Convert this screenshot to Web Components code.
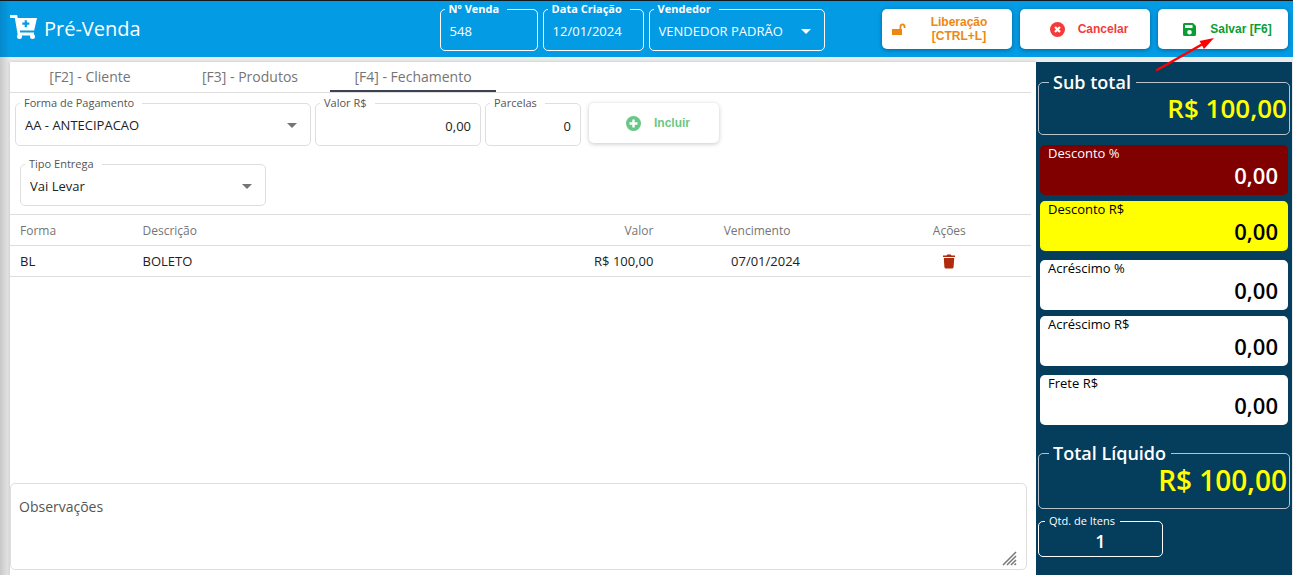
<!DOCTYPE html>
<html lang="pt-BR">
<head>
<meta charset="utf-8">
<title>Pré-Venda</title>
<style>
    html, body{height:100%}
    body{
        margin:0;
        font-family:"Open Sans", "Noto Sans", sans-serif;
        font-size:13px;
        color:#212121;
        background:#ececec
    }
</style>
</head>
<body>
<pv-pagina>
    <pv-cabecalho slot="cabecalho" titulo="Pré-Venda">
        <pv-campo class="numero" tipo="claro" rotulo="Nº Venda" valor="548"></pv-campo>
        <pv-campo class="data" tipo="claro" rotulo="Data Criação" valor="12/01/2024"></pv-campo>
        <pv-lista class="vendedor" tipo="claro" rotulo="Vendedor" valor="VENDEDOR PADRÃO"></pv-lista>
        <pv-botao slot="acoes" icone="cadeado" cor="#ee8712">Liberação [CTRL+L]</pv-botao>
        <pv-botao slot="acoes" icone="cancelar" cor="#f23c3c">Cancelar</pv-botao>
        <pv-botao slot="acoes" icone="salvar" cor="#0a9e32">Salvar [F6]</pv-botao>
    </pv-cabecalho>
    <pv-fechamento slot="conteudo"></pv-fechamento>
    <pv-totais slot="totais"></pv-totais>
</pv-pagina>
<pv-seta></pv-seta>

<template id="pv-pagina">
    <style>
        :host{display:flex;flex-direction:column;min-height:100vh;box-sizing:border-box;border-top:1px solid #14181c}
        .corpo{
            flex:1;
            display:grid;
            grid-template-columns:minmax(0, 1fr) 256px;
            padding:5px 1px 0 10px;
            background:linear-gradient(to right, #c8c8c8, #e6e6e6 9px, #ececec 10px)
        }
        ::slotted(*){min-width:0}
    </style>
    <slot name="cabecalho"></slot>
    <div class="corpo">
        <slot name="conteudo"></slot>
        <slot name="totais"></slot>
    </div>
</template>

<template id="pv-cabecalho">
    <style>
        :host{
            display:grid;
            grid-template-columns:34% 1fr auto;
            height:56px;
            color:white;
            background:linear-gradient(to right, #0489cb, #049be5 10px)
        }
        .titulo{display:flex;align-items:center;gap:7px;padding-left:10px}
        .titulo svg{width:27px;height:24px;margin-bottom:4px}
        h1{margin:0;font-size:20px;font-weight:400;line-height:28px}
        .campos{display:flex;gap:5px;padding:2px 0 6px}
        .acoes{display:flex;gap:8px;padding:8px 5px 8px 0}
        ::slotted(.numero){width:98px}
        ::slotted(.data){width:101px}
        ::slotted(.vendedor){width:176px}
    </style>
    <div class="titulo">
        <svg viewBox="0 0 27 24" fill="none" stroke="white">
            <path d="M0 1.500H6L9 19H24" stroke-width="2.800"/>
            <path d="M6 3H27L24.200 15.500H8.400Z" fill="white" stroke="none"/>
            <path d="M15.800 5.200V12.200M12.300 8.700H19.300" stroke="#049be5" stroke-width="2.200"/>
            <circle cx="9.500" cy="21.500" r="2.500" fill="white" stroke="none"/>
            <circle cx="22.500" cy="21.500" r="2.500" fill="white" stroke="none"/>
        </svg>
        <h1></h1>
    </div>
    <div class="campos"><slot></slot></div>
    <div class="acoes"><slot name="acoes"></slot></div>
</template>

<template id="pv-campo">
    <style>
        :host{display:block;--borda:#dedede;--rotulo:#555}
        :host([tipo="claro"]){--borda:white;--rotulo:white}
        fieldset{
            display:flex;
            box-sizing:border-box;
            width:100%;
            height:100%;
            min-width:0;
            margin:0;
            padding:0;
            border:1px solid var(--borda);
            border-radius:5px
        }
        legend{margin-left:4px;padding:0 8px 0 4px;font-size:11px;line-height:12px;color:var(--rotulo)}
        :host([tipo="claro"]) legend{font-weight:700}
        input, select{
            flex:1;
            box-sizing:border-box;
            width:100%;
            min-width:0;
            padding:0 9px 4px;
            border:0;
            outline:0;
            background:transparent;
            color:inherit;
            font:inherit;
            appearance:none
        }
        :host([alinhar="direita"]) input{padding-bottom:2px;text-align:right}
        svg{flex:none;align-self:center;width:10px;height:5px;margin:0 13px 3px 0;fill:#757575}
        :host([tipo="claro"]) svg{fill:white}
    </style>
    <fieldset>
        <legend><label for="entrada"></label></legend>
    </fieldset>
</template>

<template id="pv-botao">
    <style>
        :host{display:block;width:130px;height:40px}
        button{
            display:flex;
            align-items:center;
            justify-content:center;
            gap:13px;
            width:100%;
            height:100%;
            padding:0 8px 0 16px;
            border:0;
            border-radius:5px;
            background:white;
            color:var(--cor);
            font:bold 12px/14px "Liberation Sans", Arial, sans-serif;
            box-shadow:0 1px 4px rgba(0,0,0,.35)
        }
        button:disabled{opacity:.62}
        svg{flex:none;width:15px;height:15px;fill:currentColor}
        :host([icone="cadeado"]) button{gap:20px;padding:0 20px 0 9px}
    </style>
    <button type="button"><svg viewBox="0 0 15 15"></svg><span><slot></slot></span></button>
</template>

<template id="pv-fechamento">
    <style>
        :host{display:flex;flex-direction:column;background:white;box-shadow:0 0 3px rgba(0,0,0,.2)}
        nav{display:flex;height:30px;margin-right:5px;border-bottom:1px solid #dedede}
        nav button{
            box-sizing:border-box;
            min-width:160px;
            padding:0 24px;
            border:0;
            border-bottom:2px solid transparent;
            background:transparent;
            color:#757575;
            font:inherit;
            font-size:14px
        }
        nav button.ativo{min-width:166px;border-color:#3e4257}
        .linha{display:flex;gap:4px;padding:4px 5px 0}
        .linha pv-campo, .linha pv-lista{height:49px}
        .forma{width:296px}
        .valor{width:166px}
        .parcelas{width:96px}
        .linha pv-botao{margin:6px 0 0 4px}
        .entrega{padding:12px 10px 8px}
        .entrega pv-lista{width:246px;height:48px}
        table{width:calc(100% - 5px);border-collapse:collapse;table-layout:fixed}
        th, td{height:30px;padding:0 10px;border-top:1px solid #dedede;border-bottom:1px solid #dedede;text-align:left;font-size:13px;line-height:18px}
        th{height:28px;padding-top:2px;font-weight:400;font-size:12px;color:#757575}
        .direita{text-align:right}
        .centro{text-align:center}
        th.ordem{padding-right:27px}
        td button{display:block;margin:0 auto;padding:0;border:0;background:transparent}
        td svg{display:block;width:14px;height:15px;fill:#b02a0c}
        .obs{
            position:relative;
            display:flex;
            flex-direction:column;
            box-sizing:border-box;
            height:87px;
            margin:auto 9px 5px 0;
            padding:13px 8px 6px;
            border:1px solid #dedede;
            border-radius:5px
        }
        .obs label{font-size:14px;line-height:20px;color:#555}
        textarea{flex:1;border:0;outline:0;padding:0;resize:none;font:inherit}
        .obs svg{position:absolute;right:9px;bottom:3px;width:15px;height:15px;stroke:#777}
    </style>
    <nav>
        <button type="button">[F2] - Cliente</button>
        <button type="button">[F3] - Produtos</button>
        <button type="button" class="ativo">[F4] - Fechamento</button>
    </nav>
    <div class="linha">
        <pv-lista class="forma" rotulo="Forma de Pagamento" valor="AA - ANTECIPACAO"></pv-lista>
        <pv-campo class="valor" rotulo="Valor R$" valor="0,00" alinhar="direita"></pv-campo>
        <pv-campo class="parcelas" rotulo="Parcelas" valor="0" alinhar="direita"></pv-campo>
        <pv-botao icone="incluir" cor="#0ba53c" desativado>Incluir</pv-botao>
    </div>
    <div class="linha entrega">
        <pv-lista rotulo="Tipo Entrega" valor="Vai Levar"></pv-lista>
    </div>
    <table>
        <colgroup>
            <col style="width:12%"><col><col style="width:13%"><col style="width:20%"><col style="width:16%">
        </colgroup>
        <thead>
            <tr>
                <th>Forma</th>
                <th>Descrição</th>
                <th class="direita">Valor</th>
                <th class="centro ordem">Vencimento</th>
                <th class="centro">Ações</th>
            </tr>
        </thead>
        <tbody>
            <tr>
                <td>BL</td>
                <td>BOLETO</td>
                <td class="direita">R$ 100,00</td>
                <td class="centro">07/01/2024</td>
                <td class="centro">
                    <button type="button" aria-label="Excluir">
                        <svg viewBox="0 0 14 15"><path d="M1 1.500H4.500L5.300 .5H8.700L9.500 1.500H13V3H1ZM1.800 4H12.200L11.600 13Q11.500 14.500 10 14.500H4Q2.500 14.500 2.400 13Z"/></svg>
                    </button>
                </td>
            </tr>
        </tbody>
    </table>
    <div class="obs">
        <label for="obs">Observações</label>
        <textarea id="obs"></textarea>
        <svg viewBox="0 0 15 15" stroke-width="1.500"><path d="M1 14L14 1M5 14L14 5M9 14L14 9M12.500 14L14 12.500"/></svg>
    </div>
</template>

<template id="pv-totais">
    <style>
        :host{display:flex;flex-direction:column;padding:9px 2px 0;background:#053d5c}
        pv-total.liquido{margin-top:17px}
        pv-total.itens{width:125px;margin-top:6px}
        .grupo{display:flex;flex-direction:column;gap:6px;margin:9px 2px 0}
        .grupo.primeiro{margin-top:10px}
    </style>
    <pv-total rotulo="Sub total" valor="R$ 100,00"></pv-total>
    <div class="grupo primeiro">
        <pv-valor rotulo="Desconto %" valor="0,00" style="--fundo:#800000;--texto:white"></pv-valor>
        <pv-valor rotulo="Desconto R$" valor="0,00" style="--fundo:#ffff00"></pv-valor>
    </div>
    <div class="grupo">
        <pv-valor rotulo="Acréscimo %" valor="0,00"></pv-valor>
        <pv-valor rotulo="Acréscimo R$" valor="0,00"></pv-valor>
    </div>
    <div class="grupo">
        <pv-valor rotulo="Frete R$" valor="0,00"></pv-valor>
    </div>
    <pv-total class="liquido" rotulo="Total Líquido" valor="R$ 100,00"></pv-total>
    <pv-total class="itens" rotulo="Qtd. de Itens" valor="1"></pv-total>
</template>

<template id="pv-total">
    <style>
        :host{display:block;color:#ffff00}
        fieldset{margin:0;padding:0 2px 11px;min-width:0;border:1px solid #b9c3c9;border-radius:5px}
        legend{margin-left:8px;padding:0 5px 0 4px;color:white;font-size:18px;font-weight:600;line-height:22px}
        output{display:block;text-align:right;font-size:26px;font-weight:600;line-height:30px}
        :host(.liquido) fieldset{padding-bottom:12px}
        :host(.liquido) output{font-size:28px;line-height:32px}
        :host(.itens){color:white}
        :host(.itens) fieldset{padding:0 0 1px;border-color:white}
        :host(.itens) legend{margin-left:6px;font-size:11px;font-weight:400;line-height:12px}
        :host(.itens) output{text-align:center;font-size:18px;line-height:28px}
    </style>
    <fieldset>
        <legend><label for="saida"></label></legend>
        <output id="saida"></output>
    </fieldset>
</template>

<template id="pv-valor">
    <style>
        :host{
            display:flex;
            flex-direction:column;
            box-sizing:border-box;
            height:50px;
            padding:0 10px 0 8px;
            border-radius:5px;
            background:var(--fundo, white);
            color:var(--texto, black)
        }
        label{font-size:13px;line-height:16px}
        input{
            width:100%;
            height:28px;
            padding:0;
            border:0;
            outline:0;
            background:transparent;
            color:inherit;
            font:inherit;
            font-size:22px;
            font-weight:600;
            text-align:right
        }
    </style>
    <label for="entrada"></label>
    <input id="entrada" type="text">
</template>

<template id="pv-seta">
    <style>
        :host{position:absolute;top:37px;right:78px;width:60px;height:35px;pointer-events:none}
        svg{display:block}
    </style>
    <svg width="60" height="35" viewBox="0 0 60 35">
        <path d="M2 33L46 8" stroke="#f00" stroke-width="2.500" stroke-linecap="round"/>
        <path d="M59 1L49 12L44.500 4Z" fill="#f00"/>
    </svg>
</template>

<script>
const icones = {
    cadeado: '<path d="M1 7H8.500V5Q8.500 1.500 11.500 1.500T14.500 5V6H12.700V5Q12.700 3.300 11.500 3.300T10.300 5V7H11V13H1Z"/>',
    cancelar: '<circle cx="7.500" cy="7.500" r="7.500"/><path d="M5 5L10 10M10 5L5 10" stroke="white" stroke-width="2.200"/>',
    salvar: '<path fill-rule="evenodd" d="M2.500 1H11L14 4V12.500Q14 14 12.500 14H2.500Q1 14 1 12.500V2.500Q1 1 2.500 1ZM3 3V6H10.500V3ZM7.500 8A2.300 2.300 0 1 0 7.500 12.600A2.300 2.300 0 1 0 7.500 8Z"/>',
    incluir: '<circle cx="7.500" cy="7.500" r="7.500"/><path d="M7.500 3.500V11.500M3.500 7.500H11.500" stroke="white" stroke-width="2.400"/>'
};

class pvBase extends HTMLElement {

    constructor(modelo) {
        super();
        this.attachShadow({ mode: 'open' });
        this.shadowRoot.appendChild(document.getElementById(modelo).content.cloneNode(true));
    }

    buscar(seletor) {
        return this.shadowRoot.querySelector(seletor);
    }
}

class pvPagina extends pvBase {
    constructor() { super('pv-pagina'); }
}

class pvCabecalho extends pvBase {
    constructor() { super('pv-cabecalho'); }

    connectedCallback() {
        this.buscar('h1').textContent = this.getAttribute('titulo');
    }
}

class pvCampo extends pvBase {
    constructor() { super('pv-campo'); }

    connectedCallback() {
        let input = document.createElement('input');
        input.id = 'entrada';
        input.type = 'text';
        input.value = this.getAttribute('valor');
        this.buscar('label').textContent = this.getAttribute('rotulo');
        this.buscar('fieldset').appendChild(input);
    }
}

class pvLista extends pvBase {
    constructor() { super('pv-campo'); }

    connectedCallback() {
        let select = document.createElement('select');
        select.id = 'entrada';
        select.add(new Option(this.getAttribute('valor')));
        this.buscar('label').textContent = this.getAttribute('rotulo');
        this.buscar('fieldset').appendChild(select);
        this.buscar('fieldset').insertAdjacentHTML('beforeend', '<svg viewBox="0 0 10 5"><path d="M0 0H10L5 5Z"/></svg>');
    }
}

class pvBotao extends pvBase {
    constructor() { super('pv-botao'); }

    connectedCallback() {
        this.style.setProperty('--cor', this.getAttribute('cor'));
        this.buscar('svg').innerHTML = icones[this.getAttribute('icone')];
        this.buscar('button').disabled = this.hasAttribute('desativado');
    }
}

class pvFechamento extends pvBase {
    constructor() {
        super('pv-fechamento');
        var abas = this.shadowRoot.querySelectorAll('nav button');
        abas.forEach(function(aba) {
            aba.addEventListener('click', function() {
                abas.forEach(function(outra) { outra.classList.toggle('ativo', outra === aba); });
            });
        });
    }
}

class pvTotais extends pvBase {
    constructor() { super('pv-totais'); }
}

class pvTotal extends pvBase {
    constructor() { super('pv-total'); }

    connectedCallback() {
        this.buscar('label').textContent = this.getAttribute('rotulo');
        this.buscar('output').textContent = this.getAttribute('valor');
    }
}

class pvValor extends pvBase {
    constructor() { super('pv-valor'); }

    connectedCallback() {
        this.buscar('label').textContent = this.getAttribute('rotulo');
        this.buscar('input').value = this.getAttribute('valor');
    }
}

class pvSeta extends pvBase {
    constructor() { super('pv-seta'); }
}

window.customElements.define('pv-campo', pvCampo);
window.customElements.define('pv-lista', pvLista);
window.customElements.define('pv-botao', pvBotao);
window.customElements.define('pv-total', pvTotal);
window.customElements.define('pv-valor', pvValor);
window.customElements.define('pv-totais', pvTotais);
window.customElements.define('pv-fechamento', pvFechamento);
window.customElements.define('pv-cabecalho', pvCabecalho);
window.customElements.define('pv-pagina', pvPagina);
window.customElements.define('pv-seta', pvSeta);
</script>
</body>
</html>
